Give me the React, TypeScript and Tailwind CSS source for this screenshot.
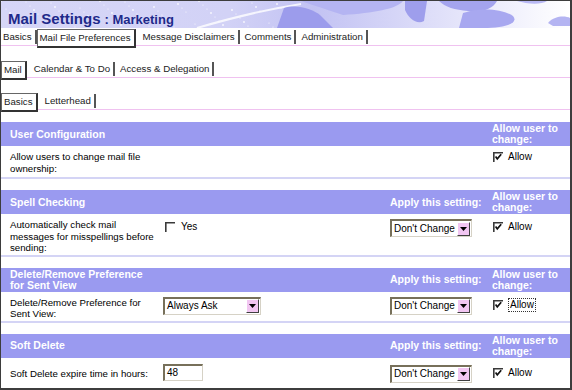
import React from 'react';

const dots = Array.from({ length: 70 }, (_, i) => ({
  x: (i * 37) % 300,
  y: (i * 13) % 27,
  r: i % 3 === 0 ? 0.9 : 0.6,
}));

const Banner = () => (
  <div className="relative h-[27px] overflow-hidden">
    <svg className="absolute inset-0" width="569" height="27" viewBox="0 0 569 27">
      <defs>
        <linearGradient id="bnr" x1="0" x2="1" y1="0" y2="0">
          <stop offset="0" stopColor="#d6d6f7" />
          <stop offset="0.4" stopColor="#d2d2f6" />
          <stop offset="0.55" stopColor="#c2c2f3" />
          <stop offset="0.8" stopColor="#e4e4fa" />
          <stop offset="1" stopColor="#ffffff" />
        </linearGradient>
      </defs>
      <rect width="569" height="27" fill="url(#bnr)" />
      {dots.map((d, i) => (
        <circle key={i} cx={d.x} cy={d.y} r={d.r} fill="#ffffff" opacity="0.85" />
      ))}
      <path d="M196 27 C230 17 262 9 300 3" stroke="#ffffff" strokeWidth="2" fill="none" opacity="0.8" />
      <path d="M276 27 L283 7 C296 3 311 8 319 14 L332 27 Z" fill="#9c9cec" />
      <path d="M300 0 L402 0 C396 8 372 12 342 14 C330 10 318 6 300 0 Z" fill="#b4b4f2" />
      <path d="M404 0 L426 0 L423 20 C416 24 408 18 404 9 Z" fill="#9e9eec" />
      <path d="M438 0 L496 0 C492 8 480 12 467 10 C454 9 444 6 438 0 Z" fill="#a4a4ee" />
      <path d="M462 12 C480 6 502 8 512 15 C518 22 505 27 482 27 L458 27 Z" fill="#a8a8f0" />
      <path d="M516 0 C526 3 540 4 546 0 Z" fill="#b8b8f4" />
      <path d="M547 22 C554 14 565 15 569 17 L569 25 L552 25 Z" fill="#b4b4f2" />
    </svg>
    <div className="relative flex h-full items-end pl-[7px] pb-[2px] font-bold text-[#1e2a8a]">
      <span className="text-[15px] leading-[15px]">Mail Settings</span>
      <span className="text-[13px] leading-[13px] ml-[4px]">: Marketing</span>
    </div>
  </div>
);

const TabRow = ({ tabs, active, className }: { tabs: string[]; active: string; className: string }) => (
  <div className={'flex h-[18px] border-b border-[#f0c2f0] text-[9.7px] leading-none text-[#222] ' + className}>
    {tabs.map((t, i) =>
      t === active ? (
        <span
          key={t}
          className="self-start mt-[1px] mr-[2px] h-[19px] flex items-center pl-[2px] pr-[3px] border border-[#666] border-r-2 border-b-2 border-r-[#333] border-b-[#333] bg-white"
        >
          {t}
        </span>
      ) : (
        <span key={t} className="flex items-center">
          <span className={i === 0 ? 'pl-[2px] pr-[3px]' : 'pl-[5px] pr-[3px]'}>{t}</span>
          <span className="w-[2px] h-[14px] bg-[#555]" />
        </span>
      ),
    )}
  </div>
);

const Check = ({ checked }: { checked?: boolean }) => (
  <svg width="10" height="10" viewBox="0 0 10 10" className="shrink-0">
    <rect x="0" y="0" width="10" height="10" fill="#ffffff" />
    <path d="M0.8 10V0.8H10" stroke="#3a3a3a" strokeWidth="1.6" fill="none" />
    {checked && <path d="M2.6 4.4 L4.3 6.9 L8.2 2.3" stroke="#111" strokeWidth="1.7" fill="none" />}
  </svg>
);

const Select = ({ value, width }: { value: string; width: string }) => (
  <div
    className={
      'flex items-center h-[18px] bg-white border-t-2 border-l-2 border-r border-b border-t-[#77705a] border-l-[#77705a] border-r-[#d6d2c6] border-b-[#d6d2c6] ' +
      width
    }
  >
    <span className="flex-1 pl-[2px] text-[10px] leading-none text-black whitespace-nowrap">{value}</span>
    <span className="mr-[1px] w-[13px] h-[14px] flex items-center justify-center bg-[#f2c6f2] border-t border-l border-white border-r border-b border-r-[#404040] border-b-[#404040]">
      <svg width="7" height="4" viewBox="0 0 7 4">
        <path d="M0 0H7L3.5 4Z" fill="#000" />
      </svg>
    </span>
  </div>
);

const Allow = ({ focus }: { focus?: boolean }) => (
  <div className="flex items-center gap-[5px] pl-[1px] text-[10px] leading-none text-black">
    <Check checked />
    <span className={focus ? 'border border-dotted border-[#333] px-[1px] py-[1px]' : ''}>Allow</span>
  </div>
);

const SectionHeader = ({ title, apply = true }: { title: React.ReactNode; apply?: boolean }) => (
  <div className="flex h-[24px] bg-[#9a9af0] text-white font-bold text-[10.5px] leading-[11px]">
    <div className="w-[389px] pl-[9px] self-center">
      <div className="w-[145px]">{title}</div>
    </div>
    <div className="w-[102px] self-center whitespace-nowrap">{apply ? 'Apply this setting:' : ''}</div>
    <div className="flex-1 self-center">
      Allow user to
      <br />
      change:
    </div>
  </div>
);

const Row = ({ children, last }: { children: React.ReactNode; last?: boolean }) => (
  <div
    className={
      'grid grid-cols-[162px_227px_102px_1fr] pt-[5px] pb-[1px] text-[9.7px] leading-[11.5px] text-black ' +
      (last ? '' : 'border-b-2 border-[#d4d4f5]')
    }
  >
    {children}
  </div>
);

export default function App() {
  return (
    <div className="w-[572px] h-[390px] overflow-hidden bg-white border-l border-t border-r-2 border-b-2 border-[#3d3d3d] font-['Liberation_Sans',Arial,sans-serif]">
      <Banner />
      <TabRow
        tabs={['Basics', 'Mail File Preferences', 'Message Disclaimers', 'Comments', 'Administration']}
        active="Mail File Preferences"
        className=""
      />
      <TabRow tabs={['Mail', 'Calendar & To Do', 'Access & Delegation']} active="Mail" className="mt-[14px]" />
      <TabRow tabs={['Basics', 'Letterhead']} active="Basics" className="mt-[14px]" />

      <div className="mt-[12px]">
        <SectionHeader title="User Configuration" apply={false} />
        <Row>
          <div className="pl-[9px] pr-[4px] pb-[2px]">Allow users to change mail file ownership:</div>
          <div />
          <div />
          <div className="pt-[1px]">
            <Allow />
          </div>
        </Row>
      </div>

      <div className="mt-[11px]">
        <SectionHeader title="Spell Checking" />
        <Row>
          <div className="pl-[9px] pr-[4px]">Automatically check mail messages for misspellings before sending:</div>
          <div className="pl-[2px] pt-[3px]">
            <div className="flex items-center gap-[6px] text-[10px] leading-none">
              <Check />
              <span>Yes</span>
            </div>
          </div>
          <div>
            <Select value="Don't Change" width="w-[82px]" />
          </div>
          <div className="pt-[3px]">
            <Allow />
          </div>
        </Row>
      </div>

      <div className="mt-[11px]">
        <SectionHeader title="Delete/Remove Preference for Sent View" />
        <Row>
          <div className="pl-[9px] pr-[4px]">Delete/Remove Preference for Sent View:</div>
          <div>
            <Select value="Always Ask" width="w-[98px]" />
          </div>
          <div>
            <Select value="Don't Change" width="w-[82px]" />
          </div>
          <div className="pt-[1px]">
            <Allow focus />
          </div>
        </Row>
      </div>

      <div className="mt-[11px]">
        <SectionHeader title="Soft Delete" />
        <Row last>
          <div className="pl-[9px] pr-[4px] pt-[5px]">Soft Delete expire time in hours:</div>
          <div className="pt-[1px]">
            <div className="w-[40px] h-[17px] flex items-center pl-[2px] text-[10px] leading-none bg-white border-t-2 border-l-2 border-r border-b border-t-[#77705a] border-l-[#77705a] border-r-[#d6d2c6] border-b-[#d6d2c6]">
              48
            </div>
          </div>
          <div className="pt-[2px]">
            <Select value="Don't Change" width="w-[82px]" />
          </div>
          <div className="pt-[5px]">
            <Allow />
          </div>
        </Row>
      </div>
    </div>
  );
}
